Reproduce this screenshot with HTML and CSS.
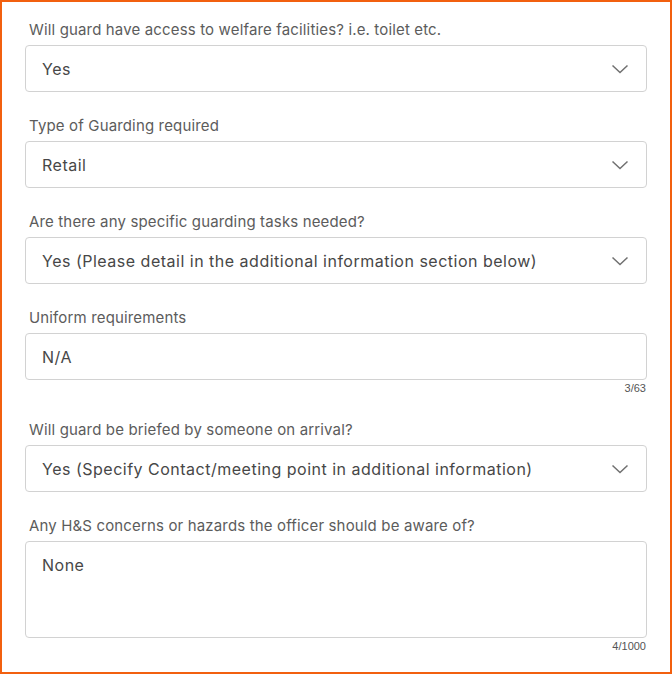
FILE: index.html
```html
<!DOCTYPE html>
<html>
<head>
<meta charset="utf-8">
<link rel="stylesheet" href="styles.css">
</head>
<body>
<div class="form">
  <div class="field">
    <label class="label">Will guard have access to welfare facilities? i.e. toilet etc.</label>
    <div class="select"><span class="value">Yes</span><svg class="chev" width="18" height="10" viewBox="0 0 18 10"><path d="M1.5 1.5 L9 8.5 L16.5 1.5" fill="none" stroke="#707070" stroke-width="1.5"/></svg></div>
  </div>
  <div class="field">
    <label class="label">Type of Guarding required</label>
    <div class="select"><span class="value">Retail</span><svg class="chev" width="18" height="10" viewBox="0 0 18 10"><path d="M1.5 1.5 L9 8.5 L16.5 1.5" fill="none" stroke="#707070" stroke-width="1.5"/></svg></div>
  </div>
  <div class="field">
    <label class="label">Are there any specific guarding tasks needed?</label>
    <div class="select"><span class="value">Yes (Please detail in the additional information section below)</span><svg class="chev" width="18" height="10" viewBox="0 0 18 10"><path d="M1.5 1.5 L9 8.5 L16.5 1.5" fill="none" stroke="#707070" stroke-width="1.5"/></svg></div>
  </div>
  <div class="field">
    <label class="label">Uniform requirements</label>
    <div class="input"><span class="value">N/A</span></div>
    <div class="counter">3/63</div>
  </div>
  <div class="field">
    <label class="label">Will guard be briefed by someone on arrival?</label>
    <div class="select"><span class="value">Yes (Specify Contact/meeting point in additional information)</span><svg class="chev" width="18" height="10" viewBox="0 0 18 10"><path d="M1.5 1.5 L9 8.5 L16.5 1.5" fill="none" stroke="#707070" stroke-width="1.5"/></svg></div>
  </div>
  <div class="field">
    <label class="label">Any H&amp;S concerns or hazards the officer should be aware of?</label>
    <div class="textarea"><span class="value">None</span></div>
    <div class="counter">4/1000</div>
  </div>
</div>
</body>
</html>
```
FILE: styles.css
```css
html, body {
  margin: 0;
  padding: 0;
  background: #fff;
}
.form {
  box-sizing: border-box;
  width: 672px;
  height: 674px;
  border: 2px solid #f2600f;
  padding: 18px 23px 0 23px;
  display: flex;
  flex-direction: column;
  gap: 24px;
  font-family: "Inter", "Liberation Sans", sans-serif;
}
.field {
  display: flex;
  flex-direction: column;
}
.label {
  display: block;
  font-size: 15px;
  line-height: 20px;
  letter-spacing: 0.15px;
  color: #5c5c5c;
  padding-left: 4px;
  margin-bottom: 5px;
}
.select, .input, .textarea {
  box-sizing: border-box;
  border: 1px solid #d2d2d2;
  border-radius: 4px;
  background: #fff;
  display: flex;
  align-items: center;
  padding: 0 17px 0 16px;
}
.select, .input {
  height: 47px;
}
.textarea {
  height: 97px;
  align-items: flex-start;
  padding-top: 13px;
}
.value {
  flex: 1;
  font-size: 16px;
  line-height: 20px;
  letter-spacing: 0.5px;
  color: #474747;
}
.chev {
  display: block;
  flex: none;
}
.counter {
  text-align: right;
  font-size: 11px;
  line-height: 16px;
  color: #555;
  padding-right: 1px;
  font-family: "Liberation Sans", sans-serif;
}
```
